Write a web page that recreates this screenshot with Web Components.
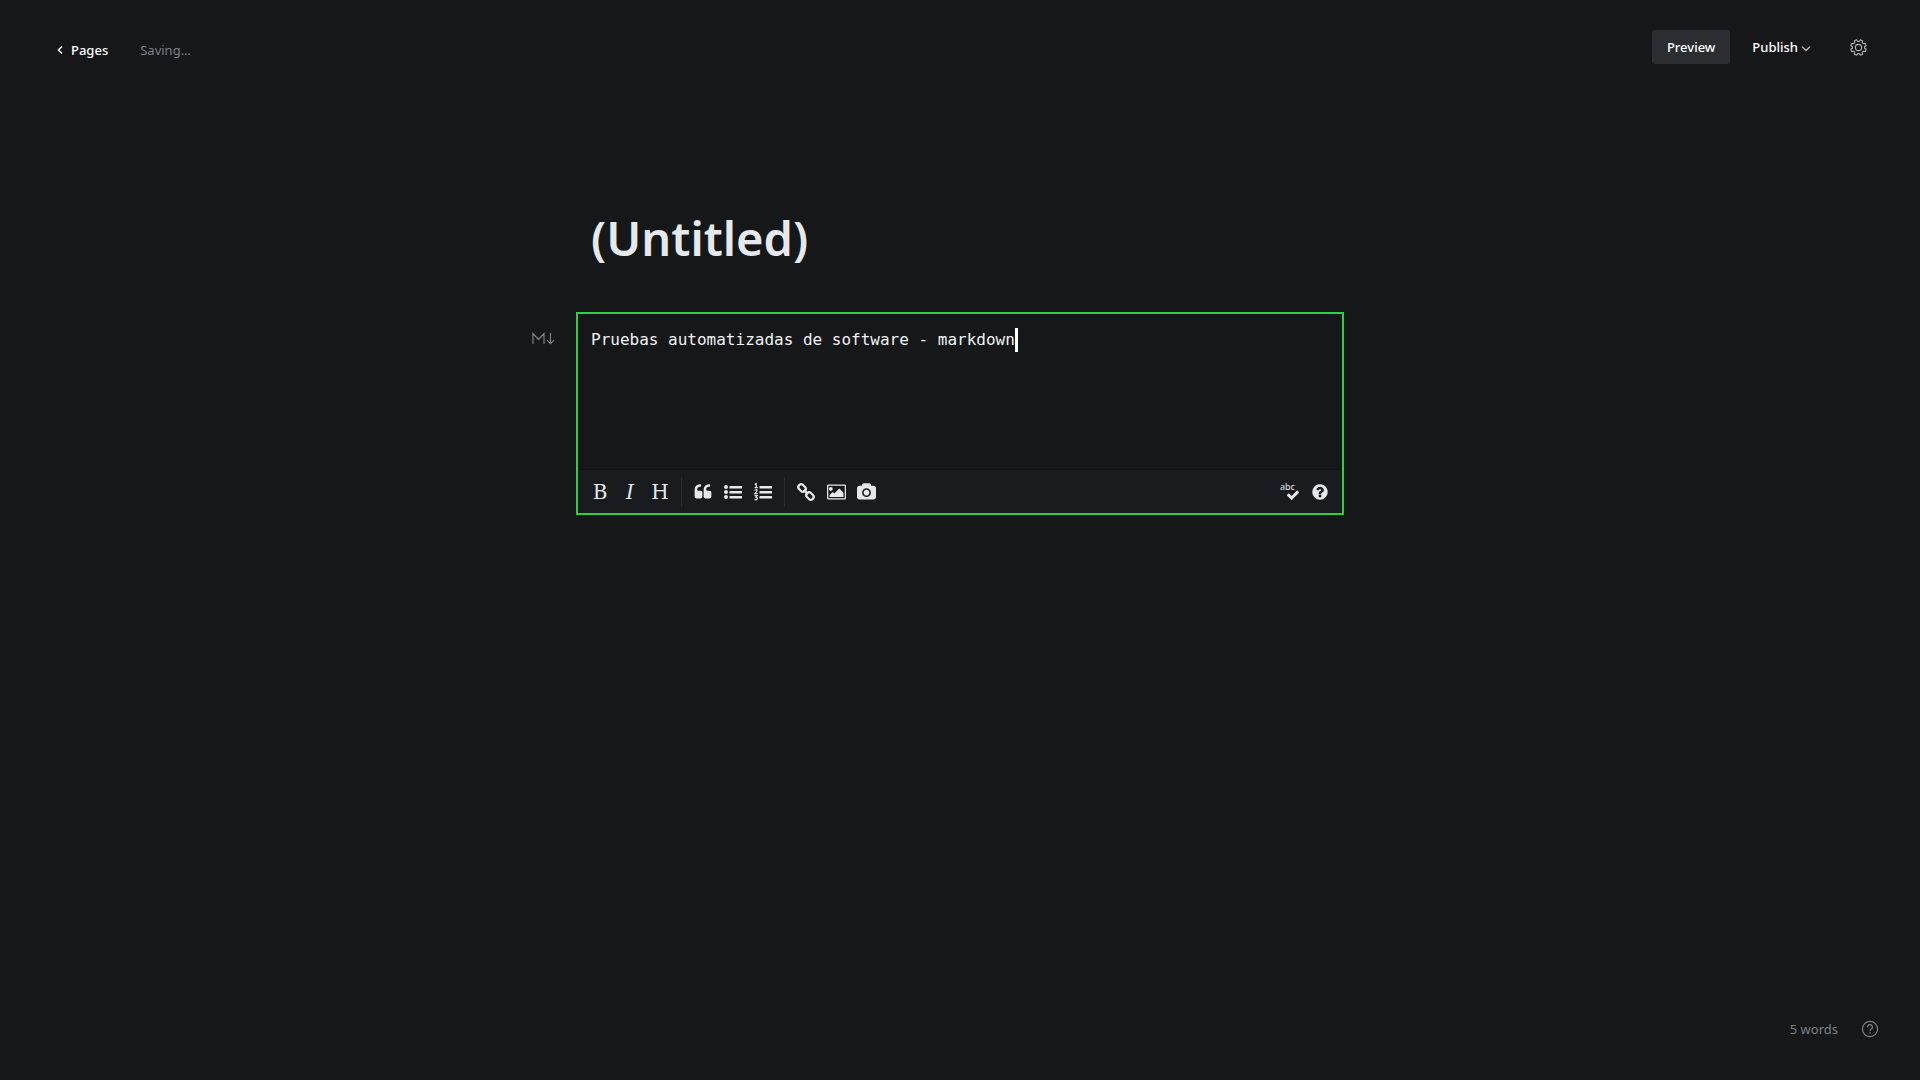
<!DOCTYPE html>
<html lang="es">
<head>
<meta charset="utf-8">
<title>Editor</title>
<style>
html, body { margin: 0; background: #151719; }
body { font-family: "Noto Sans", "Open Sans", sans-serif; color: #e5eff5; }
</style>
</head>
<body>
<editor-app></editor-app>
<script>
// Outline of an eight-toothed cog, with teeth on both sides of the vertical axis.
const cogPoints = Array.from({ length: 8 }, (_, tooth) =>
  [[-15, 8.6], [-9, 11.2], [9, 11.2], [15, 8.6]].map(([offset, radius]) => {
    const angle = (tooth * 45 + 22.5 + offset) * Math.PI / 180;
    return (12 + radius * Math.sin(angle)).toFixed(2) + ' ' + (12 - radius * Math.cos(angle)).toFixed(2);
  }).join('L')).join('L');

const ICONS = {
  back: ['0 0 6 10', 6, 10, '<path d="M5 1.4 1.4 5 5 8.6" fill="none" stroke="currentColor" stroke-width="1.4"/>'],
  down: ['0 0 10 8', 10, 8, '<path d="M1.4 2 5 5.6 8.6 2" fill="none" stroke="currentColor" stroke-width="1.4" stroke-linecap="round"/>'],
  gear: ['0 0 24 24', 17, 17, `<g fill="none" stroke="currentColor" stroke-width="1.6" stroke-linejoin="round"><circle cx="12" cy="12" r="4.4"/><path d="M${cogPoints}Z"/></g>`],
  markdown: ['0 0 23 13', 23, 13, '<path d="M1 12V1.5L6.5 7.5 12 1.5V12M18.5 1V11.5M15 8.2 18.5 11.7 22 8.2" fill="none" stroke="currentColor" stroke-width="1.2"/>'],
  quote: ['0 0 1792 1792', 18, 18, '<path d="M832 960v384q0 80-56 136t-136 56h-384q-80 0-136-56t-56-136v-704q0-104 40.5-198.5t109.5-163.5 163.5-109.5 198.5-40.5h64q26 0 45 19t19 45v128q0 26-19 45t-45 19h-64q-106 0-181 75t-75 181v32q0 40 28 68t68 28h224q80 0 136 56t56 136zm896 0v384q0 80-56 136t-136 56h-384q-80 0-136-56t-56-136v-704q0-104 40.5-198.5t109.5-163.5 163.5-109.5 198.5-40.5h64q26 0 45 19t19 45v128q0 26-19 45t-45 19h-64q-106 0-181 75t-75 181v32q0 40 28 68t68 28h224q80 0 136 56t56 136z"/>'],
  bullets: ['0 0 18 18', 18, 18, '<circle cx="2" cy="4" r="2"/><circle cx="2" cy="9" r="2"/><circle cx="2" cy="14" r="2"/><path d="M5.5 3H18v2.4H5.5zM5.5 8H18v2.4H5.5zM5.5 13H18v2.4H5.5z"/>'],
  numbers: ['0 0 18 18', 18, 18, '<path d="M5.5 3H18v2.4H5.5zM5.5 8H18v2.4H5.5zM5.5 13H18v2.4H5.5z"/><path d="M.8 1.6 2.2.7V4.7M.6 4.7H3.8M.6 7.5Q2.2 6.1 3.1 7.2 3.3 8.4.8 10.6H3.7M.6 12.6H3.2L1.9 14.2Q3.6 14.4 3.2 15.9 2.2 17.6.5 16.6" fill="none" stroke="currentColor" stroke-width="1.2"/>'],
  link: ['0 0 18 18', 18, 18, '<g fill="none" stroke="currentColor" stroke-width="2.2" transform="rotate(45 9 9)"><rect x="-.6" y="6.2" width="8" height="5.6" rx="2.6"/><rect x="10.6" y="6.2" width="8" height="5.6" rx="2.6"/><path d="M6 9H12"/></g>'],
  image: ['0 0 1920 1792', 19, 18, '<path d="M576 576q0 80-56 136t-136 56-136-56-56-136 56-136 136-56 136 56 56 136zm1088 384v448h-1408v-192l320-320 160 160 512-512zm96-704h-1600q-13 0-22.5 9.5t-9.5 22.5v1216q0 13 9.5 22.5t22.5 9.5h1600q13 0 22.5-9.5t9.5-22.5v-1216q0-13-9.5-22.5t-22.5-9.5zm160 32v1216q0 66-47 113t-113 47h-1600q-66 0-113-47t-47-113v-1216q0-66 47-113t113-47h1600q66 0 113 47t47 113z"/>'],
  camera: ['0 0 1920 1792', 19, 18, '<path d="M960 672q119 0 203.5 84.5t84.5 203.5-84.5 203.5-203.5 84.5-203.5-84.5-84.5-203.5 84.5-203.5 203.5-84.5zm704-416q106 0 181 75t75 181v896q0 106-75 181t-181 75h-1408q-106 0-181-75t-75-181v-896q0-106 75-181t181-75h224l51-136q19-49 69.5-84.5t103.5-35.5h512q53 0 103.5 35.5t69.5 84.5l51 136h224zm-704 1152q185 0 316.5-131.5t131.5-316.5-131.5-316.5-316.5-131.5-316.5 131.5-131.5 316.5 131.5 316.5 316.5 131.5z"/>'],
  check: ['0 0 1792 1792', 14, 14, '<path d="M1671 566q0 40-28 68l-724 724-136 136q-28 28-68 28t-68-28l-136-136-362-362q-28-28-28-68t28-68l136-136q28-28 68-28t68 28l294 295 656-657q28-28 68-28t68 28l136 136q28 28 28 68z"/>'],
  help: ['0 0 1792 1792', 18, 18, '<path d="M1024 1376v-192q0-14-9-23t-23-9h-192q-14 0-23 9t-9 23v192q0 14 9 23t23 9h192q14 0 23-9t9-23zm256-672q0-88-55.5-163t-138.5-116-170-41q-243 0-371 213-15 24 8 42l132 100q7 6 19 6 16 0 25-12 53-68 86-92 34-24 86-24 48 0 85.5 26t37.5 59q0 38-20 61t-68 45q-63 28-115.5 86.5t-52.5 125.5v36q0 14 9 23t23 9h192q14 0 23-9t9-23q0-19 21.5-49.5t54.5-49.5q32-18 49-28.5t46-35 44.5-48 28-60.5 12.5-81zm384 192q0 209-103 385.5t-279.5 279.5-385.5 103-385.5-103-279.5-279.5-103-385.5 103-385.5 279.5-279.5 385.5-103 385.5 103 279.5 279.5 103 385.5z"/>'],
  ask: ['0 0 18 18', 18, 18, '<g fill="none" stroke="currentColor" stroke-width="1.2"><circle cx="9" cy="9" r="7.6"/><path d="M6.6 7.2A2.4 2.4 0 1 1 9.8 9.3Q9 9.7 9 11"/></g><circle cx="9" cy="13" r=".8"/>']
};

const define = (name, html, setup) => customElements.define(name, class extends HTMLElement {
  connectedCallback() {
    if (this.shadowRoot) return;
    const template = document.createElement('template');
    template.innerHTML = html;
    this.attachShadow({ mode: 'open' }).append(template.content.cloneNode(true));
    if (setup) setup(this, this.shadowRoot);
  }
});

define('ui-icon', `<style>:host{display:block;flex:none;line-height:0}svg{display:block;fill:currentColor;overflow:visible}</style>`, (host, root) => {
  const [box, w, h, art] = ICONS[host.getAttribute('name')];
  root.innerHTML += `<svg viewBox="${box}" width="${w}" height="${h}" aria-hidden="true">${art}</svg>`;
});

define('top-bar', `
<style>
:host{display:block}
header{display:flex;justify-content:space-between;align-items:flex-start;padding:30px 53px 0 57px;font-size:13px;line-height:18px}
.left{display:flex;align-items:center;gap:32px;padding-top:11px}
a{display:flex;align-items:center;gap:8px;color:#fff;text-decoration:none;font-weight:500}
.status{color:#7c8187}
.right{display:flex;align-items:center}
button{border:0;background:none;color:#fff;font:inherit;font-weight:500;padding:0;display:flex;align-items:center;cursor:pointer}
.preview{background:#2b2d31;border-radius:3px;padding:8px 15px}
.publish{margin-left:22px;gap:3px}
.publish ui-icon{padding-top:3px;color:#b0b3b6}
.gear{margin-left:39px;color:#b0b3b6}
</style>
<header>
 <div class="left"><a href="#pages"><ui-icon name="back"></ui-icon>Pages</a><span class="status">Saving...</span></div>
 <div class="right"><button class="preview">Preview</button><button class="publish">Publish<ui-icon name="down"></ui-icon></button><button class="gear" aria-label="Settings"><ui-icon name="gear"></ui-icon></button></div>
</header>`);

define('tool-button', `
<style>
:host{display:block;flex:none}
button{box-sizing:border-box;width:30px;height:43px;border:0;padding:0;background:none;color:inherit;display:flex;align-items:center;justify-content:center;font:var(--face,inherit);cursor:pointer}
</style><button><slot></slot></button>`, (host, root) => root.querySelector('button').setAttribute('aria-label', host.getAttribute('label')));

define('tool-bar', `
<style>
:host{display:flex;justify-content:space-between;padding:0 7px;background:#191b1f;border-top:1px solid #0e0f11;color:#e5e9ed}
div{display:flex;align-items:center}
i{width:1px;height:30px;margin:0 6px;background:#282a2f}
.letter{--face:20px/22px "DejaVu Serif",serif}
.italic{--face:italic 20px/22px "DejaVu Serif",serif}
.spell{display:grid;width:20px;height:20px;justify-items:start;font:9px/9px "Noto Sans",sans-serif}
.spell>*{grid-area:1/1}
.spell ui-icon{place-self:end}
</style>
<div>
 <tool-button class="letter" label="Bold">B</tool-button><tool-button class="italic" label="Italic">I</tool-button><tool-button class="letter" label="Heading">H</tool-button><i></i>
 <tool-button label="Quote"><ui-icon name="quote"></ui-icon></tool-button><tool-button label="Bulleted list"><ui-icon name="bullets"></ui-icon></tool-button><tool-button label="Numbered list"><ui-icon name="numbers"></ui-icon></tool-button><i></i>
 <tool-button label="Link"><ui-icon name="link"></ui-icon></tool-button><tool-button label="Image"><ui-icon name="image"></ui-icon></tool-button><tool-button label="Photo"><ui-icon name="camera"></ui-icon></tool-button>
</div>
<div>
 <tool-button label="Spellcheck"><span class="spell"><span>abc</span><ui-icon name="check"></ui-icon></span></tool-button><tool-button label="Markdown help"><ui-icon name="help"></ui-icon></tool-button>
</div>`);

define('markdown-card', `
<style>
:host{display:block;position:relative;border:2px solid #30cf43}
.mark{position:absolute;right:100%;top:18px;margin-right:23px;color:#7c8187}
.edit{display:flex;align-items:flex-start;min-height:155px;box-sizing:border-box;padding:14px 13px 0}
textarea{display:block;field-sizing:content;border:0;padding:0;margin:0;outline:0;resize:none;overflow:hidden;background:none;color:#f0f2f4;font:16px/24px "DejaVu Sans Mono",monospace}
.caret{width:3px;height:24px;background:#fff;flex:none}
</style>
<ui-icon class="mark" name="markdown"></ui-icon>
<div class="edit"><textarea aria-label="Markdown" rows="1" spellcheck="false">Pruebas automatizadas de software - markdown</textarea><span class="caret"></span></div>
<tool-bar></tool-bar>`);

define('page-title', `
<style>
:host{display:block}
input{display:block;box-sizing:border-box;width:100%;padding:0 15px;border:0;outline:0;background:none;color:#e5e9ed;font-family:inherit;font-weight:600;font-size:47px;line-height:60px;height:60px}
</style><input aria-label="Title" value="(Untitled)">`);

define('status-bar', `
<style>
footer{display:flex;justify-content:flex-end;align-items:center;gap:23px;padding:0 41px 42px;font-size:13px;line-height:18px;color:#7c8187}
:host{display:block}
button{border:0;padding:0;background:none;color:inherit;display:block}
</style><footer><span>5 words</span><button aria-label="Help"><ui-icon name="ask"></ui-icon></button></footer>`);

define('editor-app', `
<style>
:host{display:flex;flex-direction:column;min-height:100vh}
main{flex:1;width:100%;max-width:768px;margin:0 auto;padding-top:144px}
markdown-card{margin-top:44px}
</style>
<top-bar></top-bar><main><page-title></page-title><markdown-card></markdown-card></main><status-bar></status-bar>`);
</script>
</body>
</html>
